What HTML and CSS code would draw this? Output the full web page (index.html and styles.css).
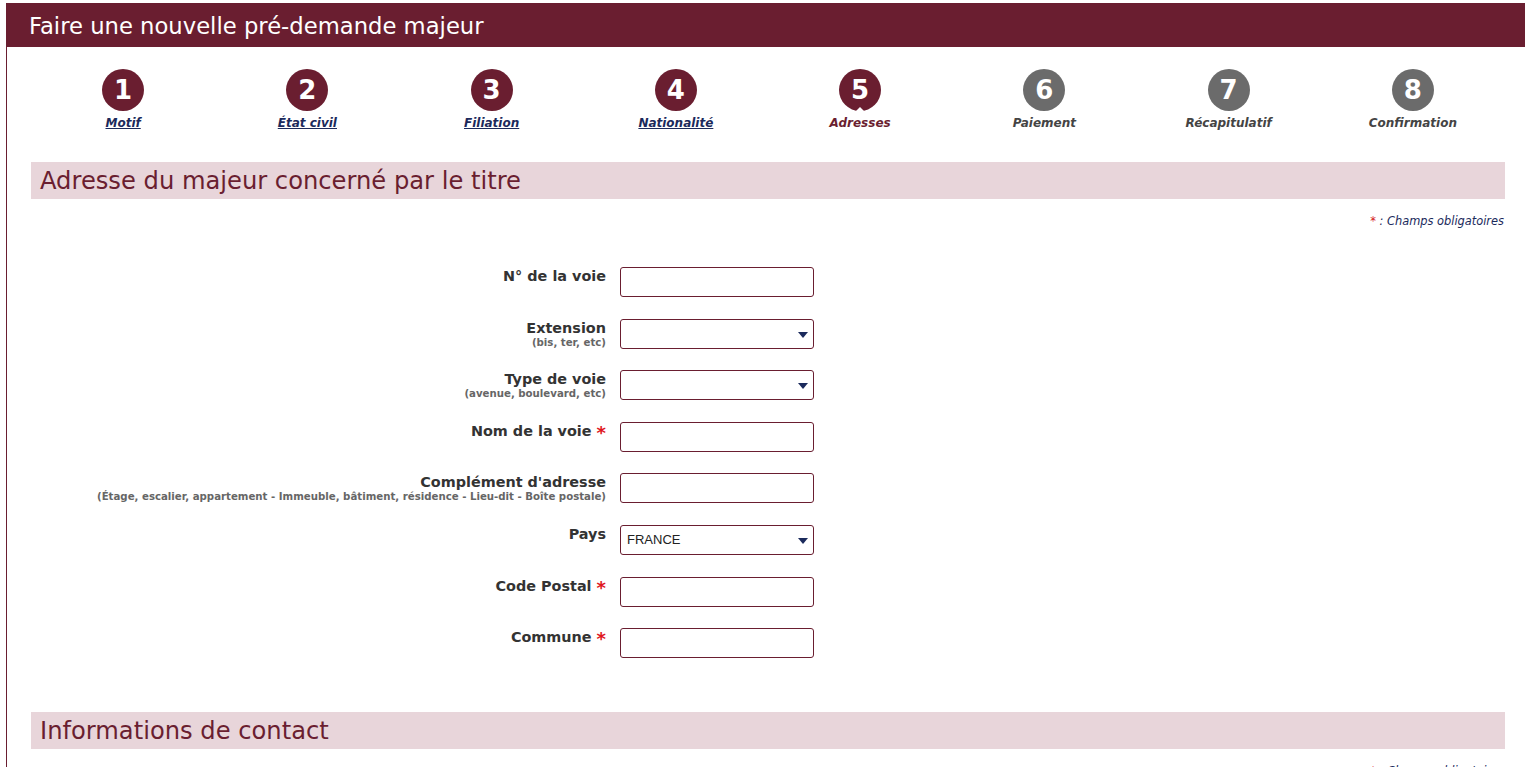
FILE: index.html
```html
<!DOCTYPE html>
<html lang="fr">
<head>
<meta charset="utf-8">
<title>Faire une nouvelle pré-demande majeur</title>
<link rel="stylesheet" href="styles.css">
</head>
<body>
<div class="page">
  <header class="titlebar">Faire une nouvelle pré-demande majeur</header>
  <div class="content">
    <ol class="steps">
      <li class="step done"><span class="num">1</span><a class="label" href="#">Motif</a></li>
      <li class="step done"><span class="num">2</span><a class="label" href="#">État civil</a></li>
      <li class="step done"><span class="num">3</span><a class="label" href="#">Filiation</a></li>
      <li class="step done"><span class="num">4</span><a class="label" href="#">Nationalité</a></li>
      <li class="step current"><span class="num">5</span><span class="label">Adresses</span></li>
      <li class="step todo"><span class="num">6</span><span class="label">Paiement</span></li>
      <li class="step todo"><span class="num">7</span><span class="label">Récapitulatif</span></li>
      <li class="step todo"><span class="num">8</span><span class="label">Confirmation</span></li>
    </ol>

    <section class="block">
      <h2 class="section-title">Adresse du majeur concerné par le titre</h2>
      <p class="required-note"><span class="star">*</span> : Champs obligatoires</p>
      <form class="form">
        <div class="field">
          <label class="field-label">N° de la voie</label>
          <input class="input" type="text">
        </div>
        <div class="field">
          <label class="field-label">Extension<span class="hint">(bis, ter, etc)</span></label>
          <div class="select"><select><option></option></select></div>
        </div>
        <div class="field">
          <label class="field-label">Type de voie<span class="hint">(avenue, boulevard, etc)</span></label>
          <div class="select"><select><option></option></select></div>
        </div>
        <div class="field">
          <label class="field-label">Nom de la voie <span class="req">*</span></label>
          <input class="input" type="text">
        </div>
        <div class="field">
          <label class="field-label">Complément d'adresse<span class="hint">(Étage, escalier, appartement - Immeuble, bâtiment, résidence - Lieu-dit - Boîte postale)</span></label>
          <input class="input" type="text">
        </div>
        <div class="field">
          <label class="field-label">Pays</label>
          <div class="select"><select><option>FRANCE</option></select></div>
        </div>
        <div class="field">
          <label class="field-label">Code Postal <span class="req">*</span></label>
          <input class="input" type="text">
        </div>
        <div class="field">
          <label class="field-label">Commune <span class="req">*</span></label>
          <input class="input" type="text">
        </div>
      </form>
    </section>

    <section class="block second">
      <h2 class="section-title">Informations de contact</h2>
      <p class="required-note"><span class="star">*</span> : Champs obligatoires</p>
    </section>
  </div>
</div>
</body>
</html>
```

FILE: styles.css
```css
html, body {
  margin: 0;
  padding: 0;
  overflow: hidden;
  background: #ffffff;
  font-family: "DejaVu Sans", Verdana, sans-serif;
}

.page {
  margin: 3px 0 0 6px;
  width: 1524px;
}

.titlebar {
  height: 44px;
  line-height: 46px;
  background: #6a1e30;
  color: #ffffff;
  font-size: 22.7px;
  padding-left: 23px;
}

.content {
  border-left: 1px solid #6a1e30;
  padding: 0 24px;
  width: 1474px;
  min-height: 800px;
}

/* Steps */
.steps {
  list-style: none;
  margin: 0;
  padding: 22px 0 0;
  display: grid;
  grid-template-columns: repeat(8, 1fr);
}

.step {
  display: flex;
  flex-direction: column;
  align-items: center;
}

.num {
  position: relative;
  width: 42px;
  height: 42px;
  border-radius: 50%;
  background: #6a1e30;
  color: #ffffff;
  font-weight: bold;
  font-size: 26px;
  line-height: 42px;
  text-align: center;
}

.todo .num {
  background: #6b6b6b;
}

.current .num::after {
  content: "";
  position: absolute;
  left: 50%;
  bottom: 0;
  margin-left: -4px;
  border-left: 4px solid transparent;
  border-right: 4px solid transparent;
  border-bottom: 4px solid #ffffff;
}

.label {
  margin-top: 5px;
  font-size: 12px;
  line-height: 15px;
  font-weight: bold;
  font-style: italic;
}

.done .label {
  color: #1b2a5c;
  text-decoration: underline;
}

.current .label {
  color: #6a1e30;
}

.todo .label {
  color: #444444;
}

/* Sections */
.block {
  margin-top: 31px;
}

.block.second {
  margin-top: 54px;
}

.section-title {
  margin: 0;
  height: 37px;
  line-height: 38px;
  background: #e8d5da;
  color: #6a1e30;
  font-size: 24.2px;
  font-weight: normal;
  padding-left: 9px;
}

.required-note {
  margin: 14px 1px 0 0;
  text-align: right;
  font-size: 11.4px;
  line-height: 16px;
  font-style: italic;
  color: #1b2a5c;
}

.star {
  color: #d42020;
  font-style: normal;
}

/* Form */
.form {
  margin-top: 38px;
  display: flex;
  flex-direction: column;
  gap: 21.6px;
}

.field {
  display: grid;
  grid-template-columns: 575px 194px;
  column-gap: 14px;
  align-items: start;
}

.field-label {
  display: flex;
  flex-direction: column;
  align-items: flex-end;
  text-align: right;
  padding-top: 1px;
  font-size: 14.4px;
  line-height: 17px;
  font-weight: bold;
  color: #333333;
}

.hint {
  display: block;
  font-size: 10.2px;
  line-height: 12px;
  color: #666666;
}

.req {
  color: #e0161d;
  font-size: 18px;
  vertical-align: -3px;
  line-height: 0;
}

.field-label:has(.req) {
  display: block;
}

.input,
.select select {
  box-sizing: border-box;
  width: 194px;
  height: 30px;
  border: 1px solid #6a1e30;
  border-radius: 3px;
  background: #ffffff;
  margin: 0;
}

.select {
  position: relative;
  width: 194px;
  height: 30px;
}

.select select {
  -webkit-appearance: none;
  appearance: none;
  padding: 0 24px 0 6px;
  font-family: "Liberation Sans", Arial, sans-serif;
  font-size: 13px;
  color: #222222;
}

.select::after {
  content: "";
  position: absolute;
  right: 6px;
  top: 13px;
  border-left: 5px solid transparent;
  border-right: 5px solid transparent;
  border-top: 6px solid #1b2a5c;
  pointer-events: none;
}
```
